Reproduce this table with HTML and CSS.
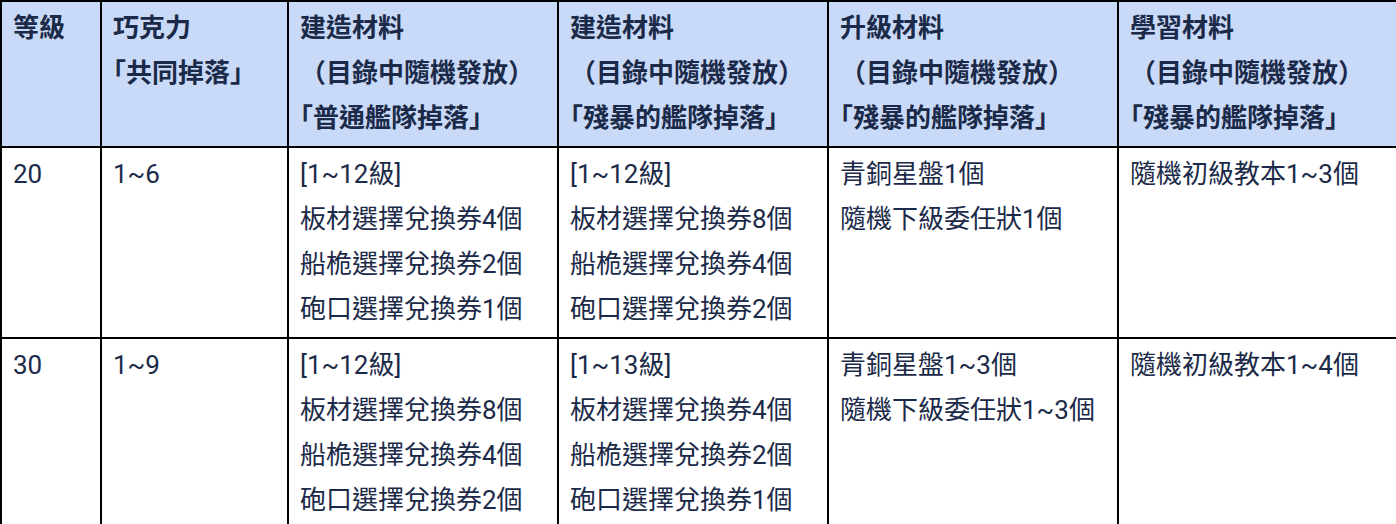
FILE: index.html
```html
<!DOCTYPE html>
<html lang="zh-Hant">
<head>
<meta charset="utf-8">
<link rel="stylesheet" href="styles.css">
</head>
<body>
<table class="drops">
<colgroup>
<col class="c-lv"><col class="c-choc"><col class="c-mat"><col class="c-mat"><col class="c-up"><col class="c-learn">
</colgroup>
<thead>
<tr>
<th>等級</th>
<th>巧克力<br>｢共同掉落｣</th>
<th>建造材料<br>（目錄中隨機發放）<br>｢普通艦隊掉落｣</th>
<th>建造材料<br>（目錄中隨機發放）<br>｢殘暴的艦隊掉落｣</th>
<th>升級材料<br>（目錄中隨機發放）<br>｢殘暴的艦隊掉落｣</th>
<th>學習材料<br>（目錄中隨機發放）<br>｢殘暴的艦隊掉落｣</th>
</tr>
</thead>
<tbody>
<tr>
<td>20</td>
<td>1~6</td>
<td>[1~12級]<br>板材選擇兌換券4個<br>船桅選擇兌換券2個<br>砲口選擇兌換券1個</td>
<td>[1~12級]<br>板材選擇兌換券8個<br>船桅選擇兌換券4個<br>砲口選擇兌換券2個</td>
<td>青銅星盤1個<br>隨機下級委任狀1個</td>
<td>隨機初級教本1~3個</td>
</tr>
<tr>
<td>30</td>
<td>1~9</td>
<td>[1~12級]<br>板材選擇兌換券8個<br>船桅選擇兌換券4個<br>砲口選擇兌換券2個</td>
<td>[1~13級]<br>板材選擇兌換券4個<br>船桅選擇兌換券2個<br>砲口選擇兌換券1個</td>
<td>青銅星盤1~3個<br>隨機下級委任狀1~3個</td>
<td>隨機初級教本1~4個</td>
</tr>
</tbody>
</table>
</body>
</html>
```

FILE: styles.css
```css
html, body {
  margin: 0;
  padding: 0;
  background: #ffffff;
  overflow: hidden;
}
body {
  font-family: Roboto, "Noto Sans CJK TC", sans-serif;
  font-size: 26px;
  color: #1b2a48;
}
.drops {
  border-collapse: collapse;
  table-layout: fixed;
  width: 1407px;
  margin: 0;
}
.c-lv { width: 100px; }
.c-choc { width: 187px; }
.c-mat { width: 270px; }
.c-up { width: 290px; }
.c-learn { width: 290px; }
.drops th,
.drops td {
  border: 2px solid #000000;
  padding: 4px 11px 5px;
  vertical-align: top;
  text-align: left;
  line-height: 45px;
  white-space: nowrap;
}
.drops th {
  background: #c9daf8;
  font-weight: 700;
}
.drops td {
  font-weight: 400;
}
```
